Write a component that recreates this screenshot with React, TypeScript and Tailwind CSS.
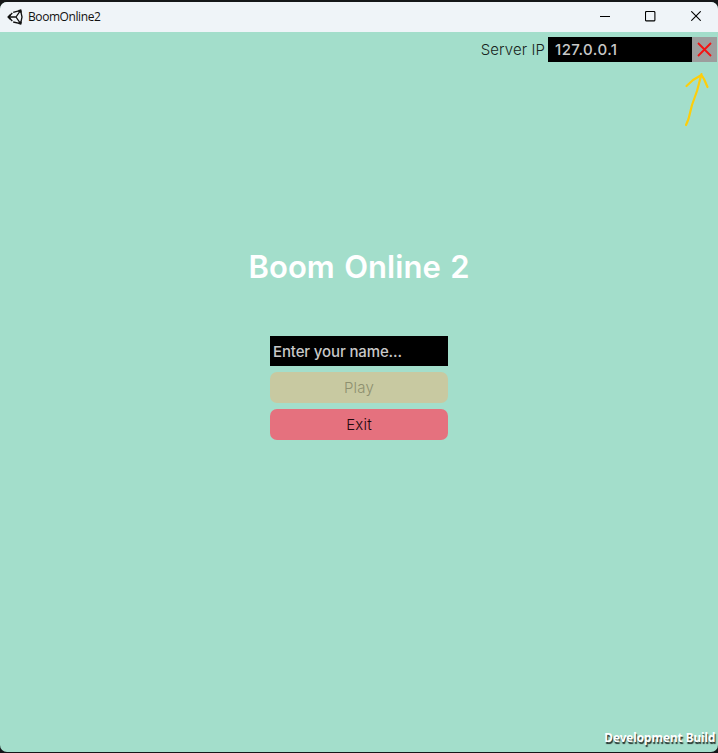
import React from "react";

function TitleBar() {
  return (
    <header className="flex h-[30px] shrink-0 items-center bg-[#eff4f8] pl-[7px]">
      <svg width="17" height="17" viewBox="0 0 17 17" fill="none" stroke="#111" strokeWidth="1.3">
        <path d="M6.2 3.3 13.6 1.4 15 8 13.6 14.7 6.2 13M5.3 4 1.4 8l3.9 4M1.4 8H9M9 8l4.6-6.6M9 8l4.6 6.7" strokeLinejoin="round" />
        <path d="M3.5 5.8 1.4 8l2.1 2.2M11.5 1.9l2.1-.5.4 2.2M11.5 14.2l2.1.5.4-2.2" strokeWidth="1.7" />
      </svg>
      <span className="ml-1 font-['Open_Sans','Noto_Sans',sans-serif] text-[12px] leading-4 tracking-[-0.42px] text-[#111]">
        BoomOnline2
      </span>
      <div className="ml-auto flex h-full items-center">
        <button className="flex h-full w-[45px] items-center justify-center pl-px" aria-label="Minimize">
          <svg width="11" height="11" viewBox="0 0 11 11" stroke="#000"><path d="M0 4.5h10" /></svg>
        </button>
        <button className="flex h-full w-[45px] items-center justify-center pb-px pl-[2px]" aria-label="Maximize">
          <svg width="11" height="11" viewBox="0 0 11 11" fill="none" stroke="#000" strokeWidth="1.1"><rect x=".5" y=".5" width="9.4" height="9.4" rx="1" /></svg>
        </button>
        <button className="flex h-full w-[46px] items-center justify-center pb-[2px] pl-[2px]" aria-label="Close">
          <svg width="10" height="10" viewBox="0 0 10 10" stroke="#000" strokeWidth="1.1"><path d="m.3.3 9.4 9.4m0-9.4L.3 9.7" /></svg>
        </button>
      </div>
    </header>
  );
}

export default function App() {
  return (
    <div className="h-[753px] w-[718px] overflow-hidden bg-[#151719] pt-[2px] pb-px font-[Inter,sans-serif]">
      <div className="relative flex h-[750px] flex-col overflow-hidden rounded-[7px] bg-[#a3decb]">
        <TitleBar />
        <div className="flex h-[30px] items-start justify-end pt-[5px] pr-px">
          <label className="mr-[3px] text-[15px] font-light leading-[25px] tracking-[0.08px] text-[#182420]">Server IP</label>
          <div className="h-[25px] w-[144px] bg-black pl-[7px] text-[15px] font-medium leading-[25px] tracking-[0.45px] text-[#c8c8c8]">127.0.0.1</div>
          <button className="flex size-[25px] items-center justify-center bg-[#9d9d9d]" aria-label="Clear">
            <svg width="15" height="15" viewBox="0 0 15 15" stroke="#f51212" strokeWidth="1.8"><path d="m1 1 13 13m0-13L1 14" /></svg>
          </button>
        </div>
        <svg className="absolute left-[682px] top-[68px]" width="30" height="60" viewBox="682 70 30 60" fill="none" stroke="#fdce0b" strokeWidth="2.2" strokeLinecap="round" strokeLinejoin="round">
          <path d="M686 125 L688.5 119 L692 105 L697 91 L701.5 74M686.5 86 L693 80 L701.5 75 L704 79 L707.5 87" />
        </svg>
        <main className="flex flex-col items-center pt-[185px]">
          <h1 className="text-[31px] font-semibold leading-10 tracking-[0.05px] text-white [word-spacing:1.5px]">Boom Online 2</h1>
          <div className="mt-[49px] flex w-[178px] flex-col">
            <div className="h-[30px] bg-black pl-[3px] pt-px text-[15px] font-medium leading-[30px] tracking-[-0.13px] text-[#c8c8c8]">Enter your name...</div>
            <button className="mt-[6px] h-[31px] rounded-[7px] bg-[#c8c9a1] pt-[2px] text-[15px] font-light tracking-[0.2px] text-[#8e906f]">Play</button>
            <button className="mt-[6px] h-[31px] rounded-[7px] bg-[#e5717e] pt-[2px] text-[15px] font-light tracking-[0.2px] text-[#22090d]">Exit</button>
          </div>
        </main>
        <footer className="mt-auto flex justify-end pr-[3px] pb-[6px] font-['Noto_Sans',sans-serif] text-[13px] font-bold leading-[18px] text-white">
          <span className="origin-right scale-x-90 [text-shadow:1px_2px_1px_#26312d]">Development Build</span>
        </footer>
      </div>
    </div>
  );
}
